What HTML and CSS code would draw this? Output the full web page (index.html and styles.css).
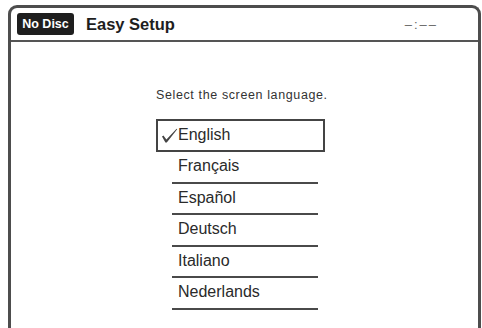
FILE: index.html
```html
<!DOCTYPE html>
<html>
<head>
<meta charset="utf-8">
<link rel="stylesheet" href="styles.css">
</head>
<body>
<div class="frame">
  <div class="header">
    <span class="badge">No Disc</span>
    <span class="title">Easy Setup</span>
    <span class="clock">–:––</span>
  </div>
  <div class="content">
    <p class="prompt">Select the screen language.</p>
    <div class="list">
      <div class="item selected">
        <svg class="check" width="17" height="16" viewBox="0 0 17 16"><path d="M1 8.5 L2.4 7.6 L5.4 11.6 L15.6 0.8 L16.2 1.3 L5.8 14.6 L4.4 14.6 Z" fill="#444"/></svg>
        <span>English</span>
      </div>
      <div class="item">Français</div>
      <div class="item">Español</div>
      <div class="item">Deutsch</div>
      <div class="item">Italiano</div>
      <div class="item">Nederlands</div>
    </div>
  </div>
</div>
</body>
</html>
```

FILE: styles.css
```css
html, body {
  margin: 0;
  padding: 0;
  background: #ffffff;
}
body {
  font-family: "Liberation Sans", Arial, sans-serif;
  color: #222;
  overflow: hidden;
}
.frame {
  box-sizing: border-box;
  margin: 5px 1px 0 8px;
  height: 323px;
  overflow: hidden;
  border: 3px solid #4d4d4d;
  border-bottom: none;
  border-radius: 9px 9px 0 0;
}
.header {
  box-sizing: border-box;
  height: 34px;
  border-bottom: 2.5px solid #555;
  display: flex;
  align-items: center;
  padding: 0 42px 0 6px;
}
.badge {
  background: #1e1e1e;
  color: #fff;
  font-weight: bold;
  font-size: 12.5px;
  height: 22px;
  width: 57px;
  border-radius: 3px;
  display: flex;
  align-items: center;
  justify-content: center;
}
.title {
  font-weight: bold;
  font-size: 16.5px;
  margin-left: 12px;
  color: #1e1e1e;
}
.clock {
  margin-left: auto;
  color: #666;
  font-size: 13px;
  letter-spacing: 2px;
  margin-right: -2px;
}
.content {
  padding-left: 145px;
}
.prompt {
  margin: 46px 0 0 0;
  font-size: 12.5px;
  line-height: 15px;
  letter-spacing: 0.62px;
  color: #333;
}
.list {
  margin-top: 16px;
  width: 169px;
}
.item {
  box-sizing: border-box;
  margin-left: 16px;
  width: 146px;
  height: 31.5px;
  border-bottom: 2px solid #4a4a4a;
  font-size: 16px;
  line-height: 27px;
  padding-left: 6px;
  color: #2a2a2a;
}
.item.selected {
  margin-left: 0;
  width: 169px;
  height: 33px;
  border: 2px solid #444;
  line-height: 24px;
  padding: 2px 0 0 3px;
  display: flex;
  align-items: flex-start;
}
.check {
  margin-top: 5px;
  flex: none;
}
```
